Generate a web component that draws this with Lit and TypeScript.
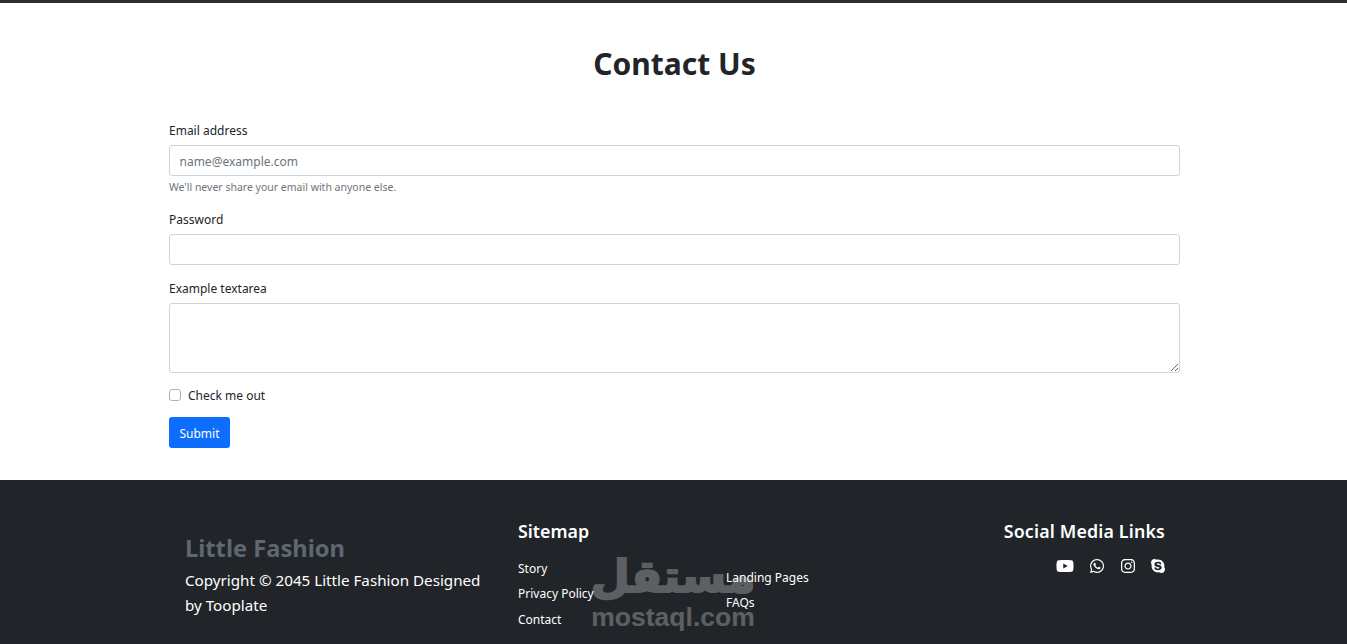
import { LitElement, html, css, svg } from "lit";
import { customElement } from "lit/decorators.js";

const icons = [
  { vb: "0 0 576 512", w: 18, d: "M549.655 124.083c-6.281-23.65-24.787-42.276-48.284-48.597C458.781 64 288 64 288 64S117.22 64 74.629 75.486c-23.497 6.322-42.003 24.947-48.284 48.597-11.412 42.867-11.412 132.305-11.412 132.305s0 89.438 11.412 132.305c6.281 23.65 24.787 41.5 48.284 47.821C117.22 448 288 448 288 448s170.78 0 213.371-11.486c23.497-6.321 42.003-24.171 48.284-47.821 11.412-42.867 11.412-132.305 11.412-132.305s0-89.438-11.412-132.305zm-317.51 213.508V175.185l142.739 81.205-142.739 81.201z" },
  { vb: "0 0 448 512", w: 14, d: "M380.9 97.1C339 55.1 283.2 32 223.9 32c-122.4 0-222 99.6-222 222 0 39.1 10.2 77.3 29.6 111L0 480l117.7-30.9c32.4 17.7 68.9 27 106.1 27h.1c122.3 0 224.1-99.6 224.1-222 0-59.3-25.2-115-67.1-157zm-157 341.6c-33.2 0-65.7-8.9-94-25.7l-6.7-4-69.8 18.3L72 359.2l-4.4-7c-18.5-29.4-28.2-63.3-28.2-98.2 0-101.7 82.8-184.5 184.6-184.5 49.3 0 95.6 19.2 130.4 54.1 34.8 34.9 56.2 81.2 56.1 130.5 0 101.8-84.9 184.6-186.6 184.6zm101.2-138.2c-5.5-2.8-32.8-16.2-37.9-18-5.1-1.9-8.8-2.8-12.5 2.8-3.7 5.6-14.3 18-17.6 21.8-3.2 3.7-6.5 4.2-12 1.4-32.6-16.3-54-29.1-75.5-66-5.7-9.8 5.7-9.1 16.3-30.3 1.8-3.7.9-6.9-.5-9.7-1.4-2.8-12.5-30.1-17.1-41.2-4.5-10.8-9.1-9.3-12.5-9.5-3.2-.2-6.9-.2-10.6-.2-3.7 0-9.7 1.4-14.8 6.9-5.1 5.6-19.4 19-19.4 46.3 0 27.3 19.9 53.7 22.6 57.4 2.8 3.7 39.1 59.7 94.8 83.8 35.2 15.2 49 16.5 66.6 13.9 10.7-1.6 32.8-13.4 37.4-26.4 4.6-13 4.6-24.1 3.2-26.4-1.3-2.5-5-3.9-10.5-6.6z" },
  { vb: "0 0 448 512", w: 14, d: "M224.1 141c-63.6 0-114.9 51.3-114.9 114.9s51.3 114.9 114.9 114.9S339 319.5 339 255.9 287.7 141 224.1 141zm0 189.6c-41.1 0-74.7-33.5-74.7-74.7s33.5-74.7 74.7-74.7 74.7 33.5 74.7 74.7-33.6 74.7-74.7 74.7zm146.4-194.3c0 14.9-12 26.8-26.8 26.8-14.9 0-26.8-12-26.8-26.8s12-26.8 26.8-26.8 26.8 12 26.8 26.8zm76.1 27.2c-1.7-35.9-9.9-67.7-36.2-93.9-26.2-26.2-58-34.4-93.9-36.2-37-2.1-147.9-2.1-184.9 0-35.8 1.7-67.6 9.9-93.9 36.1s-34.4 58-36.2 93.9c-2.1 37-2.1 147.9 0 184.9 1.7 35.9 9.9 67.7 36.2 93.9s58 34.4 93.9 36.2c37 2.1 147.9 2.1 184.9 0 35.9-1.7 67.7-9.9 93.9-36.2 26.2-26.2 34.4-58 36.2-93.9 2.1-37 2.1-147.8 0-184.8zM398.8 388c-7.8 19.6-22.9 34.7-42.6 42.6-29.5 11.7-99.5 9-132.1 9s-102.7 2.6-132.1-9c-19.6-7.8-34.7-22.9-42.6-42.6-11.7-29.5-9-99.5-9-132.1s-2.6-102.7 9-132.1c7.8-19.6 22.9-34.7 42.6-42.6 29.5-11.7 99.5-9 132.1-9s102.7-2.6 132.1 9c19.6 7.8 34.7 22.9 42.6 42.6 11.7 29.5 9 99.5 9 132.1s2.7 102.7-9 132.1z" },
  { vb: "0 0 448 512", w: 14, d: "M424.7 299.8c2.9-14 4.7-28.9 4.7-43.8 0-113.5-91.9-205.3-205.3-205.3-14.9 0-29.7 1.7-43.8 4.7C161.3 40.7 137.7 32 112 32 50.2 32 0 82.2 0 144c0 25.7 8.7 49.3 23.3 68.2-2.9 14-4.7 28.9-4.7 43.8 0 113.5 91.9 205.3 205.3 205.3 14.9 0 29.7-1.7 43.8-4.7 19 14.6 42.6 23.3 68.2 23.3 61.8 0 112-50.2 112-112 .1-25.6-8.6-49.2-23.2-68.1zm-194.6 91.5c-65.6 0-120.5-29.2-120.5-65 0-16 9-30.6 29.5-30.6 31.2 0 34.1 44.9 88.1 44.9 25.7 0 42.3-11.4 42.3-26.3 0-18.7-16-21.6-42-28-62.5-15.4-117.8-22-117.8-87.2 0-59.2 58.6-81.1 109.1-81.1 55.1 0 110.8 21.9 110.8 55.4 0 16.9-11.4 31.8-30.3 31.8-28.3 0-29.2-33.5-75-33.5-25.7 0-42 7-42 22.5 0 19.8 20.8 21.8 69.1 33 41.4 9.3 90.7 26.8 90.7 77.6 0 59.1-57.1 86.5-112 86.5z" },
];

@customElement("app-root")
export class AppRoot extends LitElement {
  static styles = css`
    :host {
      display: block;
      position: relative;
      height: 644px;
      overflow: hidden;
      background: #fff;
      color: #212529;
      font-family: "Noto Sans", "Open Sans", sans-serif;
      font-size: 12px;
    }
    * { box-sizing: border-box; }
    .contact {
      height: 480px;
      border-top: 3px solid #2b2f33;
      padding: 0 167px 0 169px;
    }
    h1 {
      margin: 0;
      padding-top: 39px;
      height: 118px;
      text-align: center;
      font-size: 30px;
      line-height: 44px;
      font-weight: 700;
    }
    form { display: flex; flex-direction: column; }
    .label { line-height: 19px; height: 19px; margin-bottom: 5px; }
    .field {
      display: block;
      width: 100%;
      height: 31px;
      padding: 2px 9.5px 0;
      border: 1px solid #ced4da;
      border-radius: 3px;
      background: #fff;
      font: inherit;
      color: #212529;
      outline: none;
    }
    .field::placeholder { color: #6c757d; opacity: 1; }
    textarea.field { height: 70px; resize: vertical; padding: 4px 9.5px; }
    .hint { margin-top: 4px; height: 15px; line-height: 15px; font-size: 10.5px; color: #6c757d; }
    .group { margin-bottom: 14px; }
    .group.first { margin-bottom: 15px; }
    .check { display: flex; align-items: center; gap: 7px; height: 19px; margin-top: -2px; margin-bottom: 13px; }
    .check span { padding-top: 2px; }
    .box {
      width: 12px; height: 12px; margin: 0;
      appearance: none;
      border: 1px solid #adb2b7;
      border-radius: 3px;
      background: #fff;
    }
    .submit {
      width: 61px; height: 31px; padding: 2px 0 0;
      border: 0; border-radius: 3px;
      background: #0d6efd; color: #fff;
      font: inherit;
    }
    footer {
      height: 164px;
      background: #212529;
      color: #fff;
      padding: 0 182px 0 185px;
      display: flex;
    }
    .brand { width: 333px; padding-top: 50px; }
    .brand h2 { margin: 0 0 2px; font-size: 23.7px; line-height: 36px; font-weight: 700; color: #5f6771; }
    .brand p { margin: 0; width: 305px; font-size: 15.2px; line-height: 25px; }
    h3 { margin: 0; font-size: 17.8px; line-height: 24px; font-weight: 600; }
    .social h3 { letter-spacing: 0.17px; }
    .sitemap { flex: 1; padding-top: 39px; }
    .links { display: flex; margin-top: 15.6px; }
    .links ul { list-style: none; margin: 0; padding: 0; width: 208px; }
    .links li { height: 25.5px; line-height: 19px; }
    .links ul + ul { padding-top: 9px; }
    .social { padding-top: 39px; display: flex; flex-direction: column; align-items: flex-end; }
    .icons { display: flex; gap: 16.5px; margin-top: 15px; align-items: center; }
    .icons svg { height: 16px; display: block; fill: #fff; }
    .mark {
      position: absolute;
      left: 592px; top: 550px;
      width: 162px;
      display: flex;
      flex-direction: column;
      align-items: center;
      color: #fff;
      font-weight: 700;
      opacity: 0.27;
      pointer-events: none;
    }
    .mark .ar {
      font-family: "DejaVu Sans", sans-serif;
      font-size: 45px; line-height: 54px; height: 54px;
      white-space: nowrap;
      -webkit-text-stroke: 2px #fff;
    }
    .mark .en { font-family: "Liberation Sans", sans-serif; font-size: 26.5px; line-height: 26px; white-space: nowrap; }
  `;

  render() {
    return html`
      <section class="contact">
        <h1>Contact Us</h1>
        <form>
          <div class="group first">
            <div class="label">Email address</div>
            <input class="field" placeholder="name@example.com" />
            <div class="hint">We'll never share your email with anyone else.</div>
          </div>
          <div class="group">
            <div class="label">Password</div>
            <input class="field" type="password" />
          </div>
          <div class="group">
            <div class="label">Example textarea</div>
            <textarea class="field"></textarea>
          </div>
          <label class="check"><input class="box" type="checkbox" /><span>Check me out</span></label>
          <div><button class="submit" type="button">Submit</button></div>
        </form>
      </section>
      <footer>
        <div class="brand">
          <h2>Little Fashion</h2>
          <p>Copyright © 2045 Little Fashion Designed by Tooplate</p>
        </div>
        <div class="sitemap">
          <h3>Sitemap</h3>
          <div class="links">
            <ul><li>Story</li><li>Privacy Policy</li><li>Contact</li></ul>
            <ul><li>Landing Pages</li><li>FAQs</li></ul>
          </div>
        </div>
        <div class="social">
          <h3>Social Media Links</h3>
          <div class="icons">
            ${icons.map(
              (i) => html`<svg viewBox=${i.vb} style="width:${i.w}px">${svg`<path d=${i.d}></path>`}</svg>`
            )}
          </div>
        </div>
      </footer>
      <div class="mark">
        <div class="ar" lang="ar" dir="rtl">مستقل</div>
        <div class="en">mostaql.com</div>
      </div>
    `;
  }
}
